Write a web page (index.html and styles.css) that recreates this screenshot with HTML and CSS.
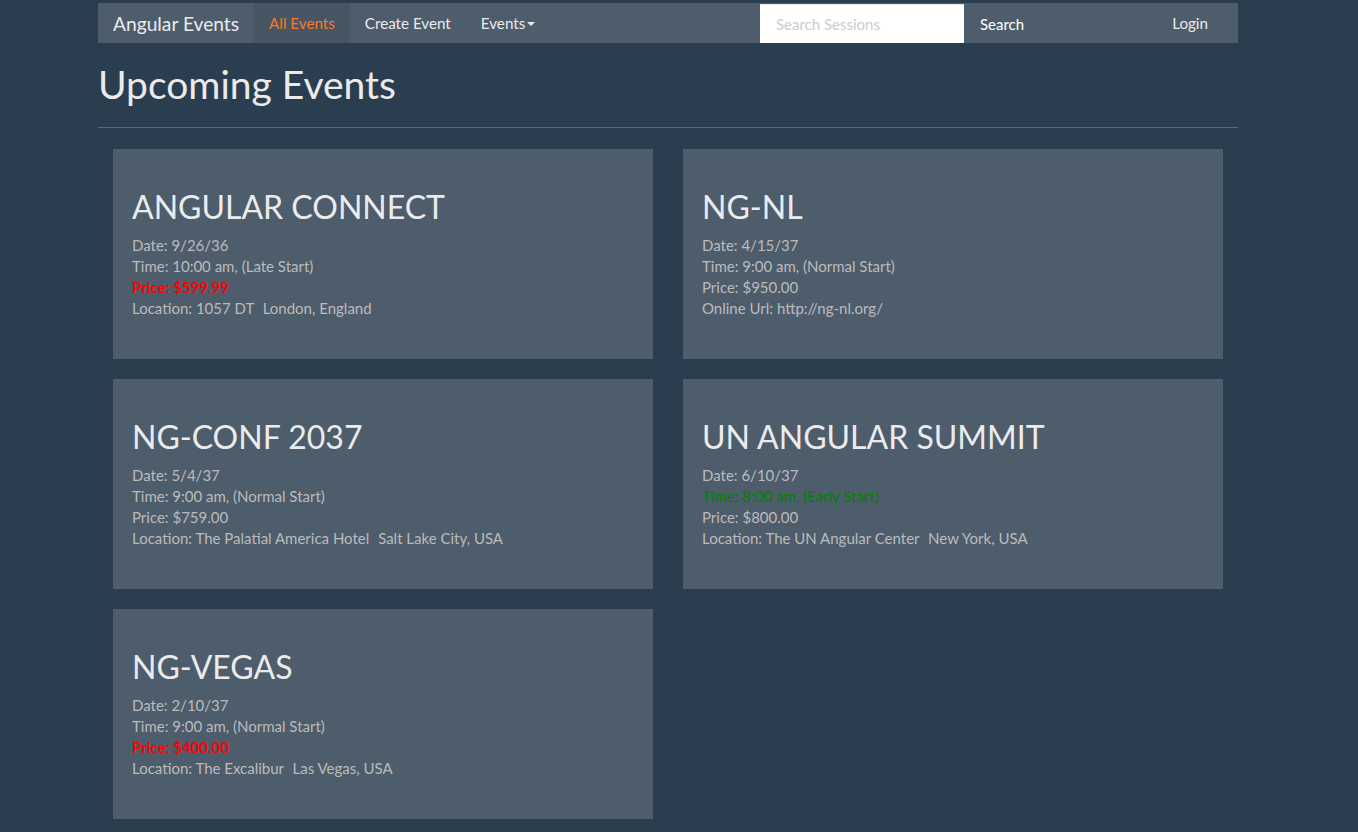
FILE: index.html
```html
<!DOCTYPE html>
<html lang="en">
<head>
<meta charset="utf-8">
<title>Angular Events</title>
<link rel="stylesheet" href="styles.css">
</head>
<body>
<div class="container">
  <nav class="navbar">
    <a class="brand" href="#">Angular Events</a>
    <ul class="nav">
      <li><a class="active" href="#">All Events</a></li>
      <li><a href="#">Create Event</a></li>
      <li><a href="#">Events<span class="caret"></span></a></li>
    </ul>
    <form class="search-form">
      <input class="search-input" type="text" placeholder="Search Sessions">
      <button class="search-btn" type="button">Search</button>
    </form>
    <ul class="nav nav-right">
      <li><a href="#">Login</a></li>
    </ul>
  </nav>

  <h1 class="page-title">Upcoming Events</h1>
  <hr class="divider">

  <div class="grid">
    <div class="well">
      <h2 class="event-name">ANGULAR CONNECT</h2>
      <div>Date: 9/26/36</div>
      <div>Time: 10:00 am, (Late Start)</div>
      <div class="red bold">Price: $599.99</div>
      <div>Location: 1057 DT <span class="pad-left">London, England</span></div>
    </div>
    <div class="well">
      <h2 class="event-name">NG-NL</h2>
      <div>Date: 4/15/37</div>
      <div>Time: 9:00 am, (Normal Start)</div>
      <div>Price: $950.00</div>
      <div>Online Url: http://ng-nl.org/</div>
    </div>
    <div class="well">
      <h2 class="event-name">NG-CONF 2037</h2>
      <div>Date: 5/4/37</div>
      <div>Time: 9:00 am, (Normal Start)</div>
      <div>Price: $759.00</div>
      <div>Location: The Palatial America Hotel <span class="pad-left">Salt Lake City, USA</span></div>
    </div>
    <div class="well">
      <h2 class="event-name">UN ANGULAR SUMMIT</h2>
      <div>Date: 6/10/37</div>
      <div class="green">Time: 8:00 am, (Early Start)</div>
      <div>Price: $800.00</div>
      <div>Location: The UN Angular Center <span class="pad-left">New York, USA</span></div>
    </div>
    <div class="well">
      <h2 class="event-name">NG-VEGAS</h2>
      <div>Date: 2/10/37</div>
      <div>Time: 9:00 am, (Normal Start)</div>
      <div class="red bold">Price: $400.00</div>
      <div>Location: The Excalibur <span class="pad-left">Las Vegas, USA</span></div>
    </div>
  </div>
</div>
</body>
</html>
```

FILE: styles.css
```css
* { box-sizing: border-box; }

html, body {
  margin: 0;
  padding: 0;
}

body {
  background: #2b3e50;
  color: #ebebeb;
  font-family: Lato, "Open Sans", "Liberation Sans", sans-serif;
  font-size: 15px;
  line-height: 1.42857;
}

.container {
  width: 1140px;
  margin-left: 98px;
}

.navbar {
  margin-top: 3px;
  height: 40px;
  background: #4e5d6c;
  display: flex;
  align-items: stretch;
}

.brand {
  display: flex;
  align-items: center;
  padding: 2px 15px 0;
  font-size: 19.2px;
  color: #ebebeb;
  text-decoration: none;
}

.nav {
  list-style: none;
  margin: 0;
  padding: 0;
  display: flex;
}

.nav li { display: flex; }

.nav a {
  display: flex;
  align-items: center;
  padding: 2px 15px 0;
  color: #ebebeb;
  text-decoration: none;
  font-size: 15.2px;
}

.nav a.active {
  color: #f97924;
  background: #485563;
}

.caret {
  display: inline-block;
  width: 0;
  height: 0;
  margin-left: 2px;
  border-top: 4px solid #ebebeb;
  border-left: 4px solid transparent;
  border-right: 4px solid transparent;
}

.search-form {
  display: flex;
  margin-left: auto;
  margin-right: 117px;
  padding-top: 1px;
}

.search-input {
  width: 204px;
  height: 39px;
  border: 0;
  border-top: 1px solid #e6e6e6;
  background: #fff;
  padding: 0 16px 1px;
  font-family: inherit;
  font-size: 15px;
  color: #2b3e50;
  outline: none;
}

.search-input::placeholder { color: #cccccc; }

.search-btn {
  height: 39px;
  border: 0;
  background: #4e5d6c;
  color: #ffffff;
  padding: 0 16px;
  font-family: inherit;
  font-size: 15px;
}

.nav-right { margin-right: 15px; }

.page-title {
  margin: 20px 0 0;
  font-size: 39px;
  font-weight: 400;
  line-height: 42px;
}

.divider {
  margin: 22px 0 21px;
  border: 0;
  border-top: 1px solid #596a7b;
}

.grid {
  display: grid;
  grid-template-columns: 540px 540px;
  column-gap: 30px;
  row-gap: 20px;
  padding: 0 15px;
}

.well {
  background: #4e5d6c;
  min-height: 210px;
  padding: 19px;
}

.well div {
  color: #bbb;
  font-size: 15px;
  line-height: 21px;
}

.event-name {
  margin: 21px 0 11px;
  font-size: 32px;
  font-weight: 400;
  line-height: 35px;
  color: #ebebeb;
}

.pad-left { margin-left: 5px; }

.well div.red { color: #ff0000; }
.well div.green { color: #008000; }
.bold { font-weight: bold; }
```
